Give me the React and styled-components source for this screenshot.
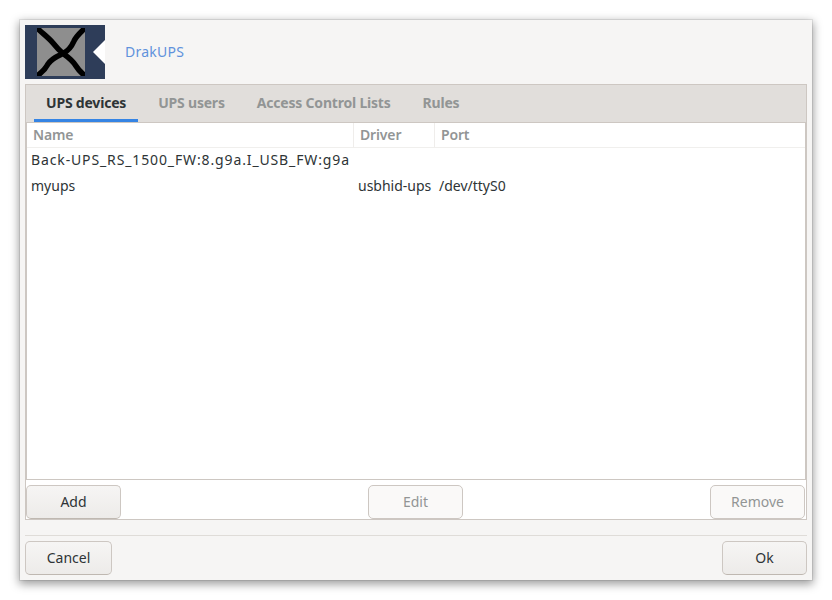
import React from "react";
import styled, { createGlobalStyle } from "styled-components";

const Global = createGlobalStyle`
  html, body { margin: 0; padding: 0; background: #ffffff; }
  * { box-sizing: border-box; }
`;
const Page = styled.div`
  width: 832px; height: 600px; padding: 20px; overflow: hidden;
  font-family: "Noto Sans", "Open Sans", sans-serif; font-size: 14px; color: #2e3436;
`;
const Window = styled.div`
  width: 792px; height: 560px; background: #f6f5f4; padding: 5px;
  display: flex; flex-direction: column;
  box-shadow: 0 3px 9px 1px rgba(0,0,0,.4), 0 0 0 1px rgba(0,0,0,.08);
`;
const Banner = styled.header`
  display: flex; align-items: center; height: 54px; gap: 20px; flex: none;
`;
const Title = styled.span`color: #6092dc; font-size: 14px; letter-spacing: .25px; line-height: 54px;`;
const Notebook = styled.section`
  margin-top: 5px; height: 436px; border: 1px solid #cdc7c2; display: flex; flex-direction: column; flex: none;
  background: #ffffff;
`;
const Tabs = styled.nav`
  display: flex; height: 38px; background: #e1dedb; border-bottom: 1px solid #cdc7c2; padding-left: 8px; flex: none;
`;
const Tab = styled.div`
  height: 37px; padding: 0 12px; margin-right: ${p => p.$gap}px; display: flex; align-items: center;
  font-weight: 700; font-size: 14px; letter-spacing: -.2px; color: ${p => p.$active ? "#2e3436" : "#929595"};
  border-bottom: ${p => p.$active ? "3px solid #3584e4" : "none"};
  padding-bottom: ${p => p.$active ? "0" : "3px"};
`;
const Content = styled.div`flex: 1; display: flex; flex-direction: column; min-height: 0;`;
const Table = styled.div`
  height: 357px; border: 1px solid #cdc7c2; border-top: none; background: #fff; flex: none;
  display: grid; grid-template-columns: 327px 81px 1fr; grid-template-rows: 25px 26px 26px; align-content: start;
`;
const Head = styled.div`
  font-weight: 600; color: #929595; font-size: 14px; letter-spacing: -.15px;
  border-bottom: 1px solid #f0efed; padding: 0 0 2px ${p => p.$pad}px;
  ${p => p.$sep ? "border-right: 1px solid #efedeb;" : ""}
  display: flex; align-items: center;
`;
const Cell = styled.div`
  padding: 0 0 4px ${p => p.$pad}px; display: flex; align-items: center; white-space: nowrap; overflow: hidden;
  font-size: 14px; color: #2e3436; letter-spacing: ${p => p.$spread || 0}px;
`;
const Actions = styled.div`
  display: flex; justify-content: space-between; margin-top: 5px; padding-right: 1px; flex: none;
`;
const Button = styled.button`
  width: ${p => p.$w}px; height: 34px; font: inherit; font-size: 14px; border-radius: 5px; padding: 0 0 2px;
  color: ${p => p.disabled ? "#929595" : "#2e3436"};
  border: 1px solid #cdc7c2;
  border-bottom-color: ${p => p.disabled ? "#cdc7c2" : "#bfb8b1"};
  background: ${p => p.disabled ? "#faf9f8" : "linear-gradient(#f6f5f4, #edebe9)"};
`;
const Rule = styled.hr`
  border: none; border-top: 1px solid #dfdcd8; margin: 15px 0 5px; height: 1px; flex: none;
`;
const Footer = styled.footer`display: flex; justify-content: space-between; flex: none;`;

const Logo = () => (
  <svg width="80" height="54" viewBox="0 0 80 54">
    <rect width="80" height="54" fill="#2e3d59" />
    <svg x="12" y="3" width="48" height="48" viewBox="0 0 48 48">
      <rect width="48" height="48" fill="#8e8e8e" />
      <path
        d="M0 0 C5 5 11 9 16 15 C20 20 23 23 26 25.5 C31 29 36 33 39 38 C42 43 45 45 48 48 M48 0 C44 4 39 8 37 13 C34 20 31 23 26 25.5 C21 28 15 30 11 36 C8 42 4 45 0 48"
        fill="none" stroke="#000" strokeWidth="5.5" strokeLinejoin="round" strokeLinecap="square"
      />
    </svg>
    <path d="M80 15 L68 27 L80 39 Z" fill="#fff" />
  </svg>
);

export default function App() {
  return (
    <Page>
      <Global />
      <Window>
        <Banner>
          <Logo />
          <Title>DrakUPS</Title>
        </Banner>
        <Notebook>
          <Tabs>
            <Tab $active $gap={8}>UPS devices</Tab>
            <Tab $gap={8}>UPS users</Tab>
            <Tab $gap={8}>Access Control Lists</Tab>
            <Tab $gap={0}>Rules</Tab>
          </Tabs>
          <Content>
            <Table>
              <Head $pad={6} $sep>Name</Head>
              <Head $pad={6} $sep>Driver</Head>
              <Head $pad={6}>Port</Head>
              <Cell $pad={4} $spread={0.87}>Back-UPS_RS_1500_FW:8.g9a.I_USB_FW:g9a</Cell>
              <Cell $pad={4} />
              <Cell $pad={4} />
              <Cell $pad={4}>myups</Cell>
              <Cell $pad={4}>usbhid-ups</Cell>
              <Cell $pad={4}>/dev/ttyS0</Cell>
            </Table>
            <Actions>
              <Button $w={95}>Add</Button>
              <Button $w={95} disabled>Edit</Button>
              <Button $w={95} disabled>Remove</Button>
            </Actions>
          </Content>
        </Notebook>
        <Rule />
        <Footer>
          <Button $w={87}>Cancel</Button>
          <Button $w={85}>Ok</Button>
        </Footer>
      </Window>
    </Page>
  );
}
